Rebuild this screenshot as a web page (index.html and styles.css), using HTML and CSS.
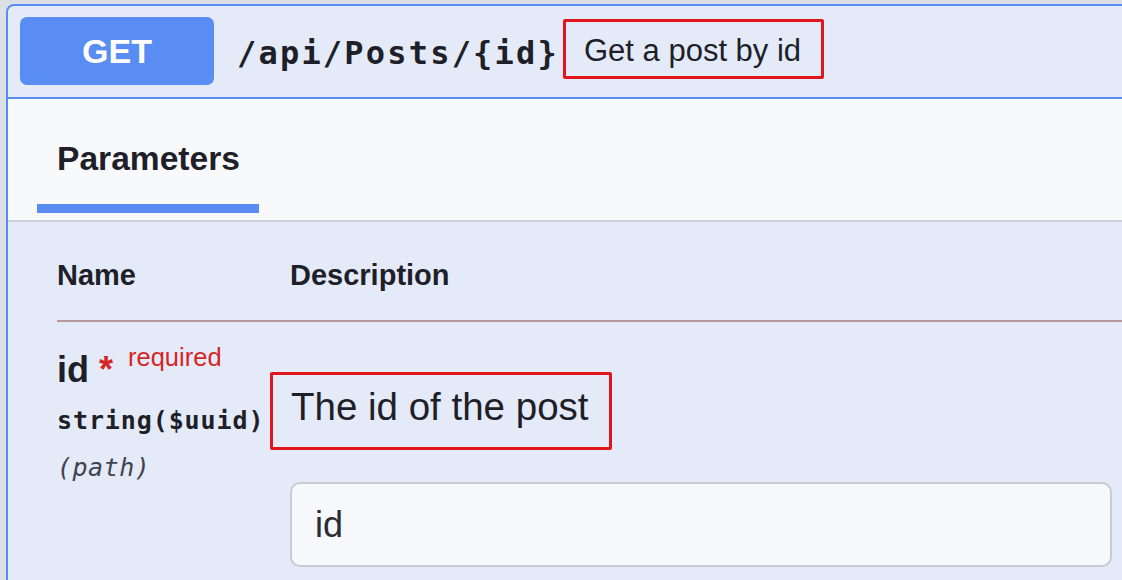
FILE: index.html
```html
<!DOCTYPE html>
<html lang="en">
<head>
<meta charset="utf-8">
<title>GET /api/Posts/{id}</title>
<link rel="stylesheet" href="styles.css">
</head>
<body>
  <div class="opblock">
    <div class="opblock-summary">
      <span class="method">GET</span>
      <span class="path">/api/Posts/{id}</span>
      <span class="summary">Get a post by id</span>
    </div>
    <div class="tabs">
      <div class="tab">Parameters</div>
    </div>
    <div class="params">
      <div class="params-head">
        <div class="col-name">Name</div>
        <div class="col-desc">Description</div>
      </div>
      <div class="param-row">
        <div class="param-name">
          <div class="name-line">id<span class="star">&nbsp;*</span><span class="required">required</span></div>
          <div class="type">string($uuid)</div>
          <div class="in">(path)</div>
        </div>
        <div class="param-desc">
          <div class="desc-box">The id of the post</div>
          <div class="input">id</div>
        </div>
      </div>
    </div>
  </div>
</body>
</html>
```
FILE: styles.css
```css
html, body {
  margin: 0;
  padding: 0;
}
body {
  background: #dcdfe4;
  overflow: hidden;
  height: 580px;
  font-family: "Liberation Sans", Arial, sans-serif;
  color: #1e1f29;
}
.opblock {
  margin: 4px 0 0 6px;
  width: 1140px;
  height: 600px;
  border: 2px solid #598df4;
  border-radius: 8px;
  background: #e4eaf7;
  box-sizing: border-box;
}
.opblock-summary {
  display: flex;
  align-items: center;
  padding: 11px 12px 12px 12px;
  border-bottom: 2px solid #598df4;
}
.method {
  width: 194px;
  height: 68px;
  border-radius: 7px;
  background: #598df4;
  color: #ffffff;
  font-weight: bold;
  font-size: 34px;
  display: flex;
  align-items: center;
  justify-content: center;
}
.path {
  margin-left: 23px;
  margin-top: 4px;
  font-family: "DejaVu Sans Mono", monospace;
  font-weight: bold;
  font-size: 32px;
  letter-spacing: 2.2px;
  line-height: 40px;
  color: #1e1f29;
}
.summary {
  margin-left: 4px;
  margin-bottom: 4px;
  border: 3px solid #e0161c;
  border-radius: 2px;
  padding: 11px 20px 7px 18px;
  font-size: 31px;
  line-height: 36px;
  color: #1e1f29;
}
.tabs {
  background: #f8f9fb;
  padding: 0 0 7px 29px;
  border-bottom: 2px solid #cdd0d6;
}
.tab {
  display: inline-block;
  padding: 40px 19px 25px 20px;
  border-bottom: 9px solid #598df4;
  font-weight: bold;
  font-size: 33.6px;
  line-height: 40px;
}
.params {
  padding-left: 49px;
}
.params-head {
  display: flex;
  padding: 36px 0 28px 0;
  border-bottom: 2px solid #b8999b;
  font-weight: bold;
  font-size: 29px;
  line-height: 34px;
}
.col-name {
  width: 233px;
}
.param-row {
  display: flex;
  align-items: flex-start;
}
.param-name {
  width: 233px;
  flex: none;
  padding-top: 28px;
}
.name-line {
  font-weight: bold;
  font-size: 36px;
  line-height: 40px;
  white-space: nowrap;
}
.star {
  color: #d42626;
}
.required {
  color: #d42626;
  font-weight: normal;
  font-size: 25.5px;
  line-height: 0;
  margin-left: 15px;
  vertical-align: 16px;
}
.type {
  margin-top: 16px;
  font-family: "DejaVu Sans Mono", monospace;
  font-weight: bold;
  font-size: 25px;
  letter-spacing: 0.9px;
  line-height: 30px;
  white-space: nowrap;
}
.in {
  margin-top: 17px;
  font-family: "DejaVu Sans Mono", monospace;
  font-style: italic;
  font-size: 25px;
  letter-spacing: 0.5px;
  line-height: 30px;
  color: #3f434f;
}
.param-desc {
  padding-top: 50px;
}
.desc-box {
  display: inline-block;
  margin-left: -20px;
  border: 3px solid #e0161c;
  border-radius: 2px;
  padding: 10px 20px 18px 18px;
  font-size: 38.5px;
  line-height: 44px;
}
.input {
  margin-top: 32px;
  width: 822px;
  height: 85px;
  box-sizing: border-box;
  border: 2px solid #c9cbd2;
  border-radius: 10px;
  background: #f6f8fc;
  padding-left: 23px;
  display: flex;
  align-items: center;
  font-size: 36px;
  color: #2a2b35;
}
```
